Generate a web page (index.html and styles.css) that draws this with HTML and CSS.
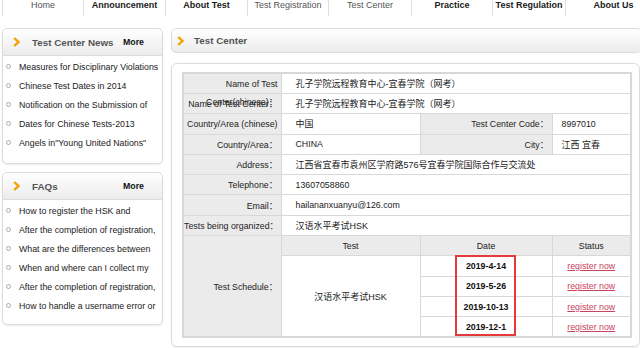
FILE: index.html
```html
<!DOCTYPE html>
<html lang="en">
<head>
<meta charset="utf-8">
<title>Test Center</title>
<link rel="stylesheet" href="styles.css">
</head>
<body>
<nav class="nav">
  <a class="nav-item w81 dim">Home</a>
  <a class="nav-item w82">Announcement</a>
  <a class="nav-item w82">About Test</a>
  <a class="nav-item w81 dim">Test Registration</a>
  <a class="nav-item w83 dim">Test Center</a>
  <a class="nav-item w81">Practice</a>
  <a class="nav-item w73">Test Regulation</a>
  <a class="nav-item w96">About Us</a>
</nav>
<div class="page">
  <aside class="side">
    <section class="box">
      <div class="box-head">
        <svg class="chev" width="7" height="10" viewBox="0 0 7 10"><polyline points="1.2,1 5.4,5 1.2,9" fill="none" stroke="#f2a500" stroke-width="2.4"/></svg>
        <span class="box-title">Test Center News</span>
        <span class="more">More</span>
      </div>
      <ul class="list list-news">
        <li>Measures for Disciplinary Violations</li>
        <li>Chinese Test Dates in 2014</li>
        <li>Notification on the Submission of</li>
        <li>Dates for Chinese Tests-2013</li>
        <li>Angels in"Young United Nations"</li>
      </ul>
    </section>
    <section class="box box-faq">
      <div class="box-head">
        <svg class="chev" width="7" height="10" viewBox="0 0 7 10"><polyline points="1.2,1 5.4,5 1.2,9" fill="none" stroke="#f2a500" stroke-width="2.4"/></svg>
        <span class="box-title">FAQs</span>
        <span class="more">More</span>
      </div>
      <ul class="list list-faq">
        <li>How to register the HSK and</li>
        <li>After the completion of registration,</li>
        <li>What are the differences between</li>
        <li>When and where can I collect my</li>
        <li>After the completion of registration,</li>
        <li>How to handle a username error or</li>
      </ul>
    </section>
  </aside>
  <main class="main">
    <div class="main-head">
      <svg class="chev" width="7" height="10" viewBox="0 0 7 10"><polyline points="1.2,1 5.4,5 1.2,9" fill="none" stroke="#f2a500" stroke-width="2.4"/></svg>
      <span class="box-title">Test Center</span>
    </div>
    <div class="table-box">
      <table class="info">
        <colgroup><col class="c1"><col class="c2"><col class="c3"><col class="c4"></colgroup>
        <tr><td class="lab"><div class="wrap2">Name of Test Center(chinese)：</div></td><td class="val cjk" colspan="3">孔子学院远程教育中心-宜春学院（网考）</td></tr>
        <tr><td class="lab">Name of Test Center：</td><td class="val cjk" colspan="3">孔子学院远程教育中心-宜春学院（网考）</td></tr>
        <tr><td class="lab">Country/Area (chinese)</td><td class="val cjk">中国</td><td class="lab">Test Center Code：</td><td class="val2">8997010</td></tr>
        <tr><td class="lab">Country/Area：</td><td class="val">CHINA</td><td class="lab">City：</td><td class="val2 cjk">江西 宜春</td></tr>
        <tr><td class="lab">Address：</td><td class="val cjk" colspan="3">江西省宜春市袁州区学府路576号宜春学院国际合作与交流处</td></tr>
        <tr><td class="lab">Telephone：</td><td class="val" colspan="3">13607058860</td></tr>
        <tr><td class="lab">Email：</td><td class="val" colspan="3">hailananxuanyu@126.com</td></tr>
        <tr><td class="lab tight">Tests being organized：</td><td class="val cjk" colspan="3">汉语水平考试HSK</td></tr>
        <tr><td class="lab" rowspan="5">Test Schedule：</td><td class="head">Test</td><td class="head">Date</td><td class="head">Status</td></tr>
        <tr><td class="ctr cjk" rowspan="4">汉语水平考试HSK</td><td class="date">2019-4-14</td><td class="ctr"><a class="reg">register now</a></td></tr>
        <tr><td class="date">2019-5-26</td><td class="ctr"><a class="reg">register now</a></td></tr>
        <tr><td class="date">2019-10-13</td><td class="ctr"><a class="reg">register now</a></td></tr>
        <tr><td class="date">2019-12-1</td><td class="ctr"><a class="reg">register now</a></td></tr>
      </table>
      <div class="mark"></div>
    </div>
  </main>
</div>
</body>
</html>
```
FILE: styles.css
```css
* { box-sizing: border-box; }
html, body { margin: 0; padding: 0; }
body {
  font-family: "Liberation Sans", Arial, "Noto Sans CJK SC", sans-serif;
  font-size: 8.8px;
  color: #222;
  background: #fff;
  width: 640px;
  height: 348px;
  overflow: hidden;
}
.nav {
  display: flex;
  height: 16px;
  padding-left: 2px;
  white-space: nowrap;
}
.nav-item {
  flex: none;
  border-left: 1px solid #dedede;
  text-align: center;
  font-size: 9px;
  line-height: 10px;
  font-weight: bold;
  color: #1a1a1a;
}
.nav-item.dim { font-weight: normal; color: #555; }
.w81 { width: 81px; } .w82 { width: 82px; } .w83 { width: 83px; }
.w73 { width: 73px; } .w96 { width: 96px; }

.page {
  display: flex;
  align-items: flex-start;
  margin-top: 12px;
  padding-left: 2px;
  gap: 8px;
}
.side { width: 161px; flex: none; }
.box {
  border: 1px solid #dcdcdc;
  border-radius: 5px;
  background: #fff;
  box-shadow: 0 1px 2px rgba(0,0,0,0.08);
  padding-bottom: 11px;
}
.box-faq { margin-top: 8px; padding-bottom: 9px; }
.box-head {
  display: flex;
  align-items: center;
  height: 27px;
  border-bottom: 1px solid #dcdcdc;
  border-radius: 5px 5px 0 0;
  background: linear-gradient(#ffffff, #ececec);
  padding-left: 10px;
}
.chev { flex: none; }
.box-title {
  font-size: 9.8px;
  font-weight: bold;
  color: #555;
  margin-left: 12px;
}
.more {
  margin-left: auto;
  margin-right: 18px;
  font-weight: bold;
  color: #111;
}
.list {
  list-style: none;
  margin: 0;
  padding: 1px 0 0 0;
}
.list li {
  display: flex;
  align-items: center;
  height: 19px;
  padding-left: 3px;
  white-space: nowrap;
  color: #1a1a1a;
}
.list li::before {
  content: "";
  width: 3px;
  height: 3px;
  border: 1px solid #aaa;
  border-radius: 50%;
  margin-right: 8px;
  flex: none;
}

.main { width: 469px; flex: none; }
.main-head {
  display: flex;
  align-items: center;
  height: 25px;
  border: 1px solid #dcdcdc;
  border-radius: 5px;
  background: linear-gradient(#ffffff, #ececec);
  padding-left: 5px;
  margin-right: -2px;
}
.main-head .box-title { margin-left: 10px; }
.table-box {
  position: relative;
  margin-top: 10px;
  border: 1px solid #dcdcdc;
  border-radius: 6px;
  box-shadow: 0 1px 2px rgba(0,0,0,0.08);
  padding: 8px 8px 8px 10px;
}
.info {
  width: 448px;
  table-layout: fixed;
  border-collapse: collapse;
  border: 2px solid #d8d8d8;
}
.c1 { width: 98px; } .c2 { width: 139px; } .c3 { width: 132px; } .c4 { width: 79px; }
.info td {
  height: 20.3px;
  padding: 0;
  border: 1px solid #d8d8d8;
  white-space: nowrap;
  vertical-align: middle;
}
.info td.lab {
  background: #ebebeb;
  text-align: right;
  padding-right: 3px;
  color: #222;
}
.info td.tight { overflow: visible; text-align: left; padding: 0; }
.wrap2 {
  white-space: normal;
  height: 19px;
  line-height: 18px;
  padding-top: 1px;
  overflow: visible;
}
.info td.val { padding-left: 14px; }
.info td.val2 { padding-left: 9px; }
.cjk { font-family: "Liberation Sans", "Noto Sans CJK SC", sans-serif; font-size: 9px; }
.info td.head { background: #ebebeb; text-align: center; }
.info td.ctr { text-align: center; }
.info td.date { text-align: center; font-weight: bold; color: #111; }
.reg { color: #c8435f; text-decoration: underline; }
.mark {
  position: absolute;
  left: 283px;
  top: 191px;
  width: 61px;
  height: 81px;
  border: 2px solid #e53a3a;
}
```
